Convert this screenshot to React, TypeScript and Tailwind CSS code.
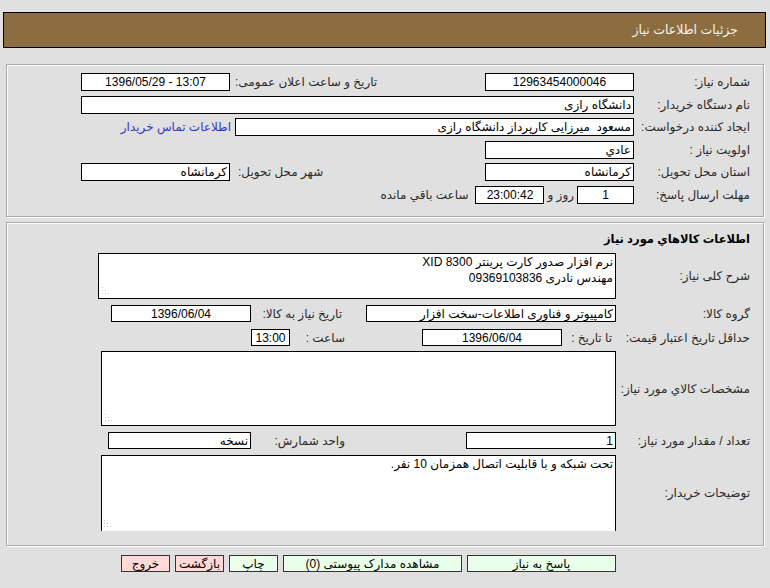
import type { ReactNode } from 'react';

function Grip() {
  return (
    <svg className="absolute left-[3px] bottom-[2px]" width="9" height="9" viewBox="0 0 9 9">
      <rect x="0" y="0" width="1" height="1" fill="#c4c4c4" />
      <rect x="0" y="3" width="1" height="1" fill="#c4c4c4" />
      <rect x="3" y="3" width="1" height="1" fill="#c4c4c4" />
      <rect x="0" y="6" width="1" height="1" fill="#c4c4c4" />
      <rect x="3" y="6" width="1" height="1" fill="#c4c4c4" />
      <rect x="6" y="6" width="1" height="1" fill="#c4c4c4" />
    </svg>
  );
}

function Box({ className, children, ltr }: { className: string; children?: ReactNode; ltr?: boolean }) {
  return (
    <div
      dir={ltr ? 'ltr' : undefined}
      className={`h-[18px] shrink-0 border border-black bg-white px-[2px] text-[12px] leading-[16px] text-black whitespace-nowrap overflow-hidden ${className}`}
    >
      {children}
    </div>
  );
}

function Area({ className, children }: { className: string; children?: ReactNode }) {
  return (
    <div className={`relative shrink-0 border border-black bg-white px-[2px] text-[12px] leading-[16px] text-black ${className}`}>
      {children}
      <Grip />
    </div>
  );
}

export default function App() {
  return (
    <div
      dir="rtl"
      className="w-[770px] min-h-[588px] bg-[#e0e0e0] pt-[12px] font-['Liberation_Sans','DejaVu_Sans',sans-serif] text-[12px] text-[#2a2a2a]"
    >
      {/* Header */}
      <div className="ml-[3px] mr-[4px] h-[36px] border border-black bg-[#8c6c41] flex items-center pr-[27px]">
        <span className="text-[12.5px] text-[#f7f3e4]">جزئیات اطلاعات نیاز</span>
      </div>

      {/* Section 1 */}
      <div className="mt-[16px] mx-[6px] h-[153px] border border-[#a9a9a9] shadow-[1px_1px_0_#fff,inset_1px_1px_0_#fff] pt-[8px] pr-[13px] pl-[74px] flex flex-col gap-[4.5px]">
        <div className="flex items-center h-[18px]">
          <div className="w-[116px] shrink-0">شماره نیاز:</div>
          <Box className="w-[149px] text-center">12963454000046</Box>
          <div className="flex-1 text-left pl-[5px] whitespace-nowrap">تاریخ و ساعت اعلان عمومی:</div>
          <Box className="w-[149px] text-center" ltr>1396/05/29 - 13:07</Box>
        </div>
        <div className="flex items-center h-[18px]">
          <div className="w-[116px] shrink-0">نام دستگاه خریدار:</div>
          <Box className="flex-1">دانشگاه رازی</Box>
        </div>
        <div className="flex items-center h-[18px]">
          <div className="w-[116px] shrink-0 whitespace-nowrap">ایجاد کننده درخواست:</div>
          <Box className="w-[399px]">مسعود&nbsp; میرزایی کارپرداز دانشگاه رازی</Box>
          <span className="mr-[4px] text-[#3535c8] whitespace-nowrap">اطلاعات تماس خریدار</span>
        </div>
        <div className="flex items-center h-[18px]">
          <div className="w-[116px] shrink-0">اولویت نیاز :</div>
          <Box className="w-[149px]">عادي</Box>
        </div>
        <div className="flex items-center h-[18px]">
          <div className="w-[116px] shrink-0">استان محل تحویل:</div>
          <Box className="w-[149px]">کرمانشاه</Box>
          <div className="flex-1 text-left pl-[8px] whitespace-nowrap">شهر محل تحویل:</div>
          <Box className="w-[149px]">کرمانشاه</Box>
        </div>
        <div className="flex items-center h-[18px]">
          <div className="w-[116px] shrink-0">مهلت ارسال پاسخ:</div>
          <Box className="w-[57px] text-center">1</Box>
          <span className="mx-[3px] whitespace-nowrap">روز و</span>
          <Box className="w-[69px] text-center">23:00:42</Box>
          <span className="mr-[7px] whitespace-nowrap">ساعت باقي مانده</span>
        </div>
      </div>

      {/* Section 2 */}
      <div className="mt-[5px] mx-[6px] h-[324px] overflow-hidden border border-[#a9a9a9] shadow-[1px_1px_0_#fff,inset_1px_1px_0_#fff] pt-[8px] pr-[13px] pl-[84px] flex flex-col">
        <div className="h-[18px] flex items-center text-[11.5px] font-bold text-black">اطلاعات کالاهاي مورد نیاز</div>

        <div className="mt-[4px] flex items-center">
          <div className="w-[134px] shrink-0">شرح کلی نیاز:</div>
          <Area className="w-[518px] h-[46px]">
            <div>نرم افزار صدور کارت پرینتر XID 8300</div>
            <div>مهندس نادری 09369103836</div>
          </Area>
        </div>

        <div className="mt-[6px] flex items-center h-[17px]">
          <div className="w-[134px] shrink-0">گروه کالا:</div>
          <Box className="w-[250px] !h-[17px]">کامپیوتر و فناوری اطلاعات-سخت افزار</Box>
          <div className="mr-[24px] w-[91px] shrink-0 whitespace-nowrap">تاریخ نیاز به کالا:</div>
          <Box className="w-[140px] !h-[17px] text-center">1396/06/04</Box>
        </div>

        <div className="mt-[7px] flex items-center h-[17px]">
          <div className="w-[134px] shrink-0 whitespace-nowrap">حداقل تاریخ اعتبار قیمت:</div>
          <div className="w-[54px] shrink-0 pr-[4px] whitespace-nowrap">تا تاریخ :</div>
          <Box className="w-[140px] !h-[17px] text-center">1396/06/04</Box>
          <div className="mr-[77px] w-[55px] shrink-0 whitespace-nowrap">ساعت :</div>
          <Box className="w-[39px] !h-[17px] text-center">13:00</Box>
        </div>

        <div className="mt-[5px] flex items-center">
          <div className="w-[134px] shrink-0 whitespace-nowrap">مشخصات کالاي مورد نیاز:</div>
          <Area className="w-[515px] h-[75px]" />
        </div>

        <div className="mt-[6px] flex items-center h-[17px]">
          <div className="w-[134px] shrink-0 whitespace-nowrap">تعداد / مقدار مورد نیاز:</div>
          <Box className="w-[150px] !h-[17px]">1</Box>
          <div className="mr-[121px] w-[94px] shrink-0 whitespace-nowrap">واحد شمارش:</div>
          <Box className="w-[143px] !h-[17px]">نسخه</Box>
        </div>

        <div className="mt-[6px] flex items-center">
          <div className="w-[134px] shrink-0">توضیحات خریدار:</div>
          <div className="relative w-[515px] h-[76px] overflow-hidden shrink-0">
            <div className="h-[80px] border border-black bg-white px-[2px] text-[12px] leading-[16px] text-black">
              تحت شبکه و با قابلیت اتصال همزمان 10 نفر.
            </div>
            <Grip />
          </div>
        </div>
      </div>

      {/* Buttons */}
      <div className="mt-[9px] mr-[154px] flex gap-[5px] text-[12px] text-black">
        <div className="w-[149px] h-[17px] border border-[#333] bg-[#eaffea] flex items-center justify-center">پاسخ به نیاز</div>
        <div className="w-[179px] h-[17px] border border-[#333] bg-[#eaffea] flex items-center justify-center">مشاهده مدارک پیوستی (0)</div>
        <div className="w-[49px] h-[17px] border border-[#333] bg-[#eaffea] flex items-center justify-center">چاپ</div>
        <div className="w-[49px] h-[17px] border border-[#333] bg-[#ffd8d8] flex items-center justify-center whitespace-nowrap">بازگشت</div>
        <div className="w-[49px] h-[17px] border border-[#333] bg-[#ffd8d8] flex items-center justify-center">خروج</div>
      </div>
    </div>
  );
}
